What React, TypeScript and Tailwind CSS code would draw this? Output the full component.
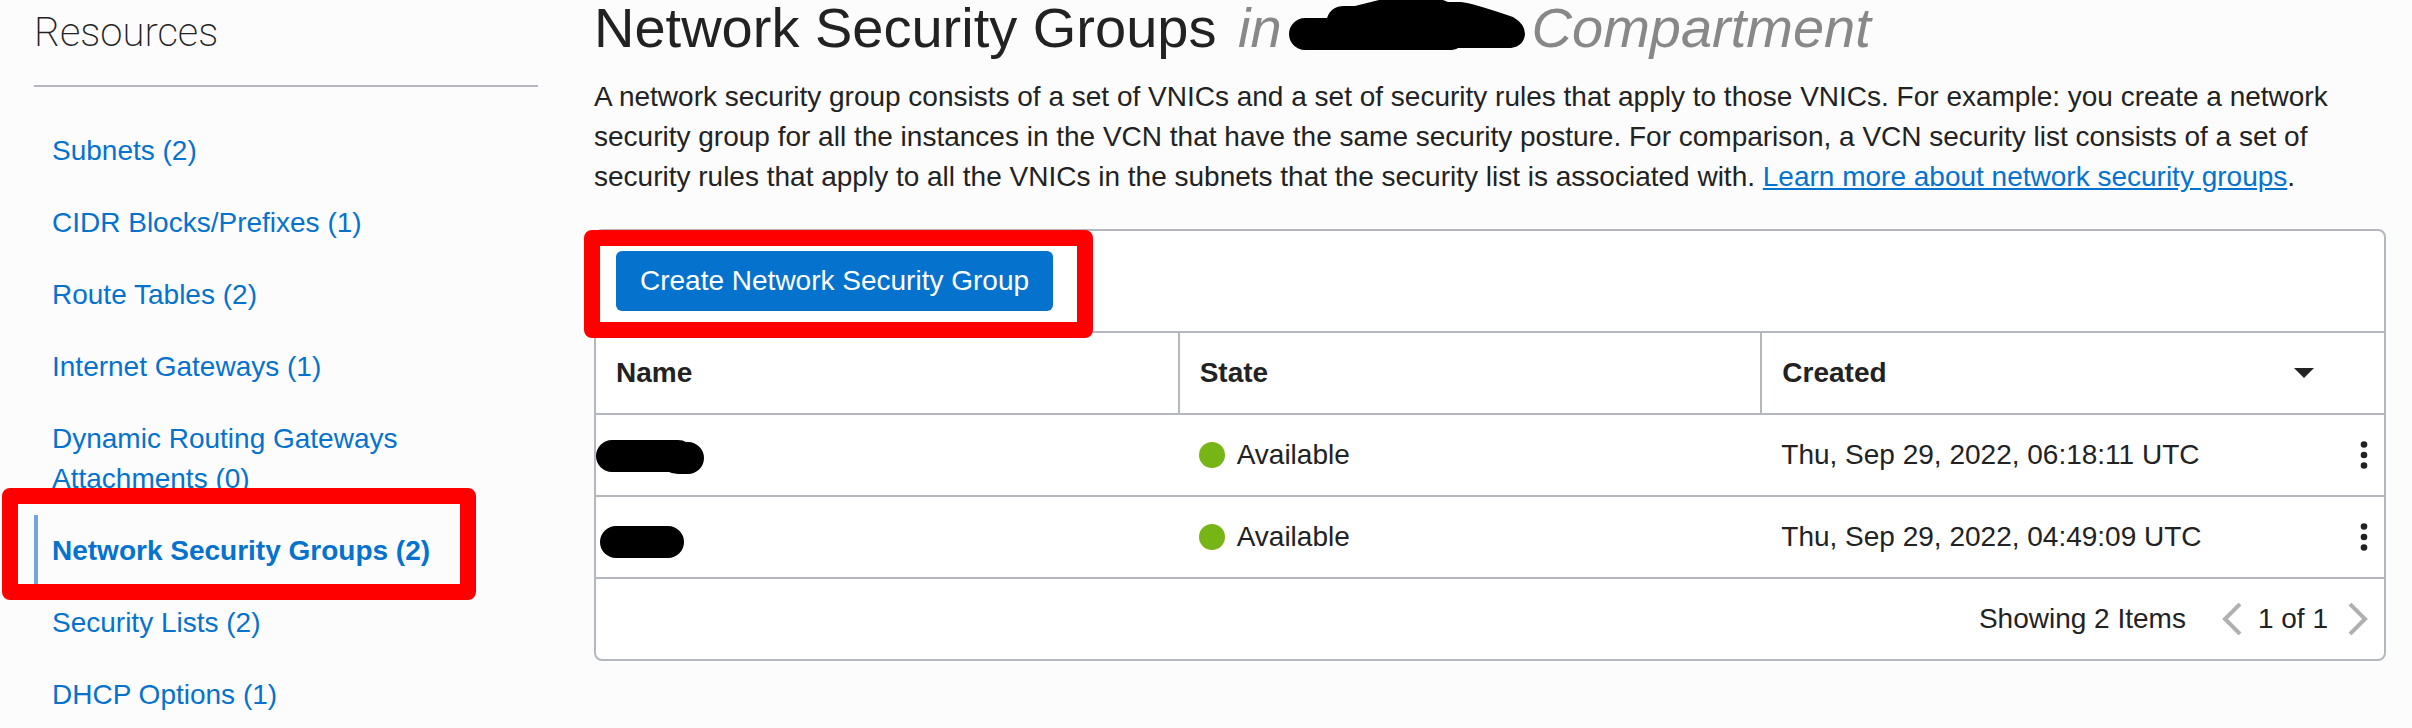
const resources = [
  { label: "Subnets", count: 2 },
  { label: "CIDR Blocks/Prefixes", count: 1 },
  { label: "Route Tables", count: 2 },
  { label: "Internet Gateways", count: 1 },
  { label: "Dynamic Routing Gateways Attachments", count: 0 },
  { label: "Network Security Groups", count: 2, active: true },
  { label: "Security Lists", count: 2 },
  { label: "DHCP Options", count: 1 },
];

const groups = [
  {
    id: 1,
    state: "Available",
    created: "Thu, Sep 29, 2022, 06:18:11 UTC",
    mask: "M16 25 H82 Q87 25 90 27 H92 A16 16 0 0 1 92 59 H86 Q78 59 73 57 H16 A16 16 0 0 1 16 25 Z",
  },
  {
    id: 2,
    state: "Available",
    created: "Thu, Sep 29, 2022, 04:49:09 UTC",
    mask: "M20 29 H72 A16 16 0 0 1 72 61 H20 A16 16 0 0 1 20 29 Z",
  },
];

const Sidebar = () => (
  <aside className="w-[504px] shrink-0">
    <h2 className="border-b-2 border-[#b4b8be] pt-0.5 pb-[21px] font-['Roboto',sans-serif] text-[40px] leading-[62px] font-extralight">
      Resources
    </h2>
    <ul className="mt-7">
      {resources.map((item) => (
        <li key={item.label} className="relative">
          <a
            href="#"
            className={
              item.active
                ? "block border-l-4 border-[#76a4e0] py-4 pr-20 pl-[14px] font-bold text-[#0572ce]"
                : "block py-4 pr-20 pl-[18px] text-[#0572ce]"
            }
          >
            {item.label} ({item.count})
          </a>
          {item.active && (
            <span className="pointer-events-none absolute -top-[27px] right-[62px] -bottom-[13px] -left-8 z-10 rounded-lg border-16 border-[#ff0000]" />
          )}
        </li>
      ))}
    </ul>
  </aside>
);

const GroupsTable = () => (
  <table className="w-full table-fixed border-collapse text-left">
    <colgroup>
      <col />
      <col />
      <col />
      <col className="w-10" />
    </colgroup>
    <thead>
      <tr className="border-b-2 border-[#b4b8be]">
        <th className="border-r-2 border-[#b4b8be] px-5 py-5">Name</th>
        <th className="border-r-2 border-[#b4b8be] px-5 py-5">State</th>
        <th colSpan={2} className="py-5 pr-[70px] pl-5">
          <div className="flex items-center justify-between">
            Created
            <svg className="h-[10px] w-5" viewBox="0 0 20 10" fill="#222">
              <path d="M0 0 H20 L10 10 Z" />
            </svg>
          </div>
        </th>
      </tr>
    </thead>
    <tbody>
      {groups.map((group) => (
        <tr key={group.id} className="border-b-2 border-[#b4b8be]">
          <td className="p-0">
            <svg className="block h-20 w-28" viewBox="0 0 112 80">
              <path d={group.mask} />
            </svg>
          </td>
          <td className="px-5">
            <div className="flex items-center gap-3">
              <span className="size-[26px] rounded-full bg-[#77b517]" />
              {group.state}
            </div>
          </td>
          <td className="px-5">{group.created}</td>
          <td className="p-0">
            <button type="button" aria-label="Actions" className="flex h-10 w-full items-center justify-center">
              <svg className="h-7 w-2" viewBox="0 0 8 28" fill="#222">
                <circle cx="4" cy="3.5" r="3.3" />
                <circle cx="4" cy="14" r="3.3" />
                <circle cx="4" cy="24.5" r="3.3" />
              </svg>
            </button>
          </td>
        </tr>
      ))}
    </tbody>
  </table>
);

const Pagination = () => (
  <div className="flex items-center justify-end px-4 py-5">
    <span className="mr-9">Showing 2 Items</span>
    <button type="button" aria-label="Previous page">
      <svg className="h-8 w-5" viewBox="0 0 20 32" fill="none" stroke="#b0b0b0" strokeWidth="4">
        <path d="M18 1 L3 16 L18 31" />
      </svg>
    </button>
    <span className="mr-5 ml-4">1 of 1</span>
    <button type="button" aria-label="Next page">
      <svg className="h-8 w-5" viewBox="0 0 20 32" fill="none" stroke="#b0b0b0" strokeWidth="4">
        <path d="M2 1 L17 16 L2 31" />
      </svg>
    </button>
  </div>
);

const App = () => {
  return (
    <div className="flex min-h-screen gap-14 bg-[#fcfcfc] pr-[26px] pl-[34px] font-['Liberation_Sans',Arial,sans-serif] text-[28px] leading-10 text-[#222]">
      <Sidebar />
      <main className="min-w-0 flex-1">
        <h1 className="mb-[21px] flex text-[56px] leading-14 whitespace-pre">
          Network Security Groups{" "}
          <span className="ml-1.5 flex text-[#888] italic">
            in
            <svg className="mx-1.5 h-14 w-[238px]" viewBox="0 0 238 56" fill="#000">
              <path d="M17 18 H39 Q43 6 56 6 H67 L91 0 H155 L160 2 H173 Q184 3 225 17 Q237 24 237 34 Q236 46 223 48 H170 Q167 50 161 50 H17 A16 16 0 0 1 17 18 Z" />
            </svg>
            Compartment
          </span>
        </h1>
        <p>
          A network security group consists of a set of VNICs and a set of security rules that apply to those VNICs. For
          example: you create a network security group for all the instances in the VCN that have the same security
          posture. For comparison, a VCN security list consists of a set of security rules that apply to all the VNICs
          in the subnets that the security list is associated with.{" "}
          <a href="#" className="text-[#0572ce] underline">
            Learn more about network security groups
          </a>
          .
        </p>
        <section className="mt-8 rounded-lg border-2 border-[#b4b8be] bg-white">
          <div className="border-b-2 border-[#b4b8be] p-5">
            <div className="relative w-fit">
              <button type="button" className="block rounded-md bg-[#0572ce] px-6 py-[10px] text-white">
                Create Network Security Group
              </button>
              <span className="pointer-events-none absolute -top-[21px] -right-10 -bottom-[27px] -left-8 z-10 rounded-lg border-16 border-[#ff0000]" />
            </div>
          </div>
          <GroupsTable />
          <Pagination />
        </section>
      </main>
    </div>
  );
};

export default App;
